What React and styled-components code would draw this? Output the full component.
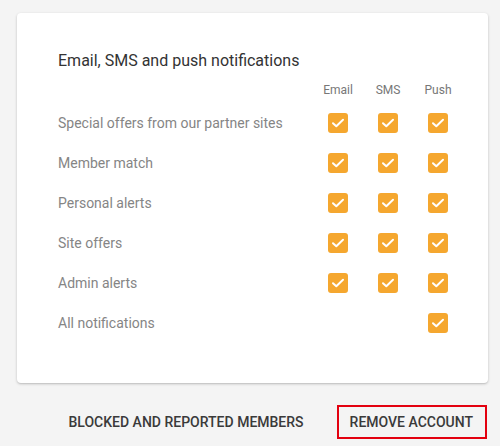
import React from "react";
import styled, { createGlobalStyle } from "styled-components";

const Global = createGlobalStyle`
  html, body { margin: 0; padding: 0; background: #f4f4f4; }
  body { font-family: Roboto, "Liberation Sans", Arial, sans-serif; }
`;

const Page = styled.div`
  padding: 13px 12px 0 17px;
`;

const Card = styled.section`
  background: #fff;
  border-radius: 4px;
  box-shadow: 0 1px 3px rgba(0, 0, 0, 0.2), 0 1px 1px rgba(0, 0, 0, 0.06);
  padding: 37px 25px 40px 41px;
`;

const Title = styled.h2`
  margin: 0;
  font-size: 16px;
  line-height: 22px;
  font-weight: 400;
  color: #333;
`;

const Grid = styled.div`
  display: grid;
  grid-template-columns: 1fr 50px 50px 50px;
  margin-top: 10px;
`;

const ColHead = styled.div`
  font-size: 12px;
  line-height: 16px;
  color: #777;
  text-align: center;
  margin-bottom: 5px;
`;

const Label = styled.div`
  font-size: 14px;
  line-height: 40px;
  height: 40px;
  color: #858585;
`;

const Cell = styled.div`
  height: 40px;
  display: flex;
  align-items: center;
  justify-content: center;
`;

const Box = styled.span`
  width: 20px;
  height: 20px;
  border-radius: 3px;
  background: #f5a72f;
  display: flex;
  align-items: center;
  justify-content: center;
`;

const Footer = styled.div`
  display: flex;
  justify-content: flex-end;
  gap: 19px;
  padding: 22px 1px 0 0;
`;

const Button = styled.button`
  background: transparent;
  border: 2px solid ${(p) => (p.$highlight ? "#e3000f" : "transparent")};
  padding: 0 12px 0 11px;
  height: 34px;
  font-family: Roboto, "Liberation Sans", Arial, sans-serif;
  font-size: 14px;
  font-weight: 500;
  text-transform: uppercase;
  color: #3a3a3a;
  cursor: pointer;
`;

const Check = () => (
  <Box>
    <svg width="14" height="12" viewBox="0 0 14 12">
      <path d="M2 6.2 L5.3 9.2 L12 2.8" fill="none" stroke="#fff" strokeWidth="2" strokeLinecap="round" strokeLinejoin="round" />
    </svg>
  </Box>
);

const rows = [
  ["Special offers from our partner sites", [true, true, true]],
  ["Member match", [true, true, true]],
  ["Personal alerts", [true, true, true]],
  ["Site offers", [true, true, true]],
  ["Admin alerts", [true, true, true]],
  ["All notifications", [false, false, true]],
];

export default function App() {
  return (
    <Page>
      <Global />
      <Card>
        <Title>Email, SMS and push notifications</Title>
        <Grid>
          <ColHead />
          <ColHead>Email</ColHead>
          <ColHead>SMS</ColHead>
          <ColHead>Push</ColHead>
          {rows.map(([label, vals]) => (
            <React.Fragment key={label}>
              <Label>{label}</Label>
              {vals.map((v, i) => (
                <Cell key={i}>{v && <Check />}</Cell>
              ))}
            </React.Fragment>
          ))}
        </Grid>
      </Card>
      <Footer>
        <Button>Blocked and reported members</Button>
        <Button $highlight>Remove account</Button>
      </Footer>
    </Page>
  );
}
